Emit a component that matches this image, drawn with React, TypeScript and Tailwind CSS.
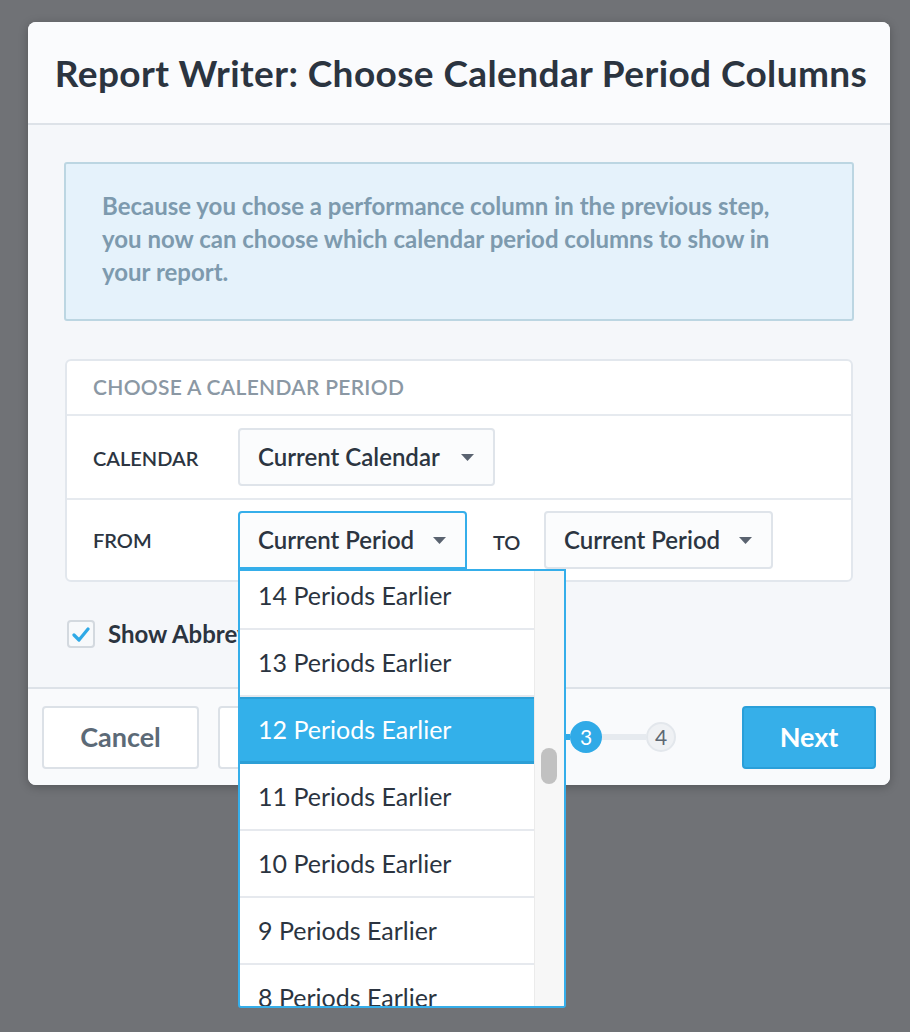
import React from 'react';

const periods = [
  '14 Periods Earlier',
  '13 Periods Earlier',
  '12 Periods Earlier',
  '11 Periods Earlier',
  '10 Periods Earlier',
  '9 Periods Earlier',
  '8 Periods Earlier',
];

const Caret = () => (
  <svg width="13" height="7" viewBox="0 0 13 7" className="shrink-0">
    <path d="M0 0h13L6.5 7z" fill="#5a6370" />
  </svg>
);

const Select = ({ label, width, active }: { label: string; width: string; active?: boolean }) => (
  <div
    className={`flex h-[58px] items-center justify-between rounded-[4px] border-2 bg-[#fbfcfd] pl-[18px] pr-[19px] text-[24px] font-semibold text-[#2c3541] ${width} ${
      active ? 'rounded-b-none border-[#35aeea]' : 'border-[#dfe4ea]'
    }`}
  >
    <span>{label}</span>
    <Caret />
  </div>
);

const Step = ({ n, state }: { n: number; state: 'done' | 'current' | 'todo' }) => (
  <div
    className={`flex items-center justify-center rounded-full text-[21px] ${
      state === 'todo'
        ? 'h-[30px] w-[30px] border-2 border-[#e3e7ec] bg-[#eff1f4] text-[#5d6772]'
        : 'h-[32px] w-[32px] bg-[#30aae7] text-white'
    }`}
  >
    {n}
  </div>
);

export default function App() {
  return (
    <div className="relative min-h-[1032px] w-[910px] bg-[#707276] pl-[28px] pr-[20px] pt-[22px] font-[Lato,sans-serif]">
      <div className="overflow-hidden rounded-[8px] bg-[#f5f7fa] shadow-[0_2px_10px_rgba(0,0,0,0.25)]">
        {/* header */}
        <div className="flex h-[103px] items-center justify-center border-b-2 border-[#dde2e8] bg-[#fafbfd] pl-[4px]">
          <h1 className="text-[37px] font-bold tracking-[0.4px] text-[#2b3440]">
            Report Writer: Choose Calendar Period Columns
          </h1>
        </div>

        {/* body */}
        <div className="px-[36px] pb-[39px] pt-[37px]">
          <div className="h-[159px] rounded-[3px] border-2 border-[#bcd6e2] bg-[#e5f2fb] px-[36px] pt-[25px] text-[24px] font-bold leading-[33px] text-[#7d9aae]">
            Because you chose a performance column in the previous step,
            <br />
            you now can choose which calendar period columns to show in
            <br />
            your report.
          </div>

          <div className="mx-[1px] mt-[38px] rounded-[6px] border-2 border-[#e2e7ed] bg-white">
            <div className="flex h-[55px] items-center border-b-2 border-[#e6eaef] px-[26px] pb-[2px] text-[21px] font-semibold tracking-[0.3px] text-[#8b98a4]">
              CHOOSE A CALENDAR PERIOD
            </div>
            <div className="flex h-[84px] items-center border-b-2 border-[#e6eaef] px-[26px]">
              <div className="w-[145px] pt-[2px] text-[20px] font-semibold text-[#2c3541]">CALENDAR</div>
              <Select label="Current Calendar" width="w-[257px]" />
            </div>
            <div className="flex h-[80px] items-center px-[26px]">
              <div className="w-[145px] text-[20px] font-semibold text-[#2c3541]">FROM</div>
              <Select label="Current Period" width="w-[229px]" active />
              <div className="ml-[26px] w-[51px] pt-[4px] text-[20px] font-semibold text-[#2c3541]">TO</div>
              <Select label="Current Period" width="w-[229px]" />
            </div>
          </div>

          <div className="mt-[38px] flex h-[28px] items-center gap-[13px] pl-[3px]">
            <div className="flex h-[28px] w-[28px] items-center justify-center rounded-[4px] border-2 border-[#d3d9df] bg-[#f7f9fb]">
              <svg width="18" height="15" viewBox="0 0 18 15">
                <path d="M2 8l5 5 9-11" fill="none" stroke="#2ea9e6" strokeWidth="3.2" strokeLinecap="round" strokeLinejoin="round" />
              </svg>
            </div>
            <span className="text-[24px] font-bold text-[#2b3440]">Show Abbreviations</span>
          </div>
        </div>

        {/* footer */}
        <div className="flex h-[98px] items-center border-t-2 border-[#dde2e8] bg-[#f9fafc] px-[14px]">
          <button className="h-[63px] w-[157px] rounded-[4px] border-2 border-[#dce1e7] bg-white text-[27px] font-bold text-[#5c6a77]">
            Cancel
          </button>
          <button className="ml-[19px] h-[63px] w-[157px] rounded-[4px] border-2 border-[#dce1e7] bg-white text-[27px] font-bold text-[#5c6a77]">
            Back
          </button>
          <div className="ml-[45px] flex items-center">
            <Step n={1} state="done" />
            <div className="h-[6px] w-[43px] bg-[#30aae7]" />
            <Step n={2} state="done" />
            <div className="h-[6px] w-[43px] bg-[#30aae7]" />
            <Step n={3} state="current" />
            <div className="h-[6px] w-[44px] bg-[#e6eaef]" />
            <Step n={4} state="todo" />
          </div>
          <button className="ml-auto h-[63px] w-[134px] rounded-[4px] border-2 border-[#2a9fd9] bg-[#36afe9] text-[27px] font-bold text-white">
            Next
          </button>
        </div>
      </div>

      {/* open dropdown of the FROM select */}
      <div className="absolute left-[238px] top-[569px] flex h-[439px] w-[328px] overflow-hidden rounded-b-[3px] border-2 border-[#35aeea] bg-white">
        <div className="flex-1 overflow-hidden">
          <div className="-mt-[8px]">
            {periods.map((p, i) => (
              <div
                key={p}
                className={`flex h-[67px] items-center pl-[18px] text-[25px] ${
                  i === 2
                    ? 'border-b-[3px] border-t-[2px] border-[#2c9fd6] bg-[#33b0ea] text-white'
                    : 'border-b-2 border-[#e6e9ee] text-[#2b3440]'
                }`}
              >
                {p}
              </div>
            ))}
          </div>
        </div>
        <div className="w-[30px] border-l border-[#ebebeb] bg-[#f7f7f7] pl-[6px] pt-[177px]">
          <div className="h-[36px] w-[16px] rounded-full bg-[#c1c1c1]" />
        </div>
      </div>
    </div>
  );
}
